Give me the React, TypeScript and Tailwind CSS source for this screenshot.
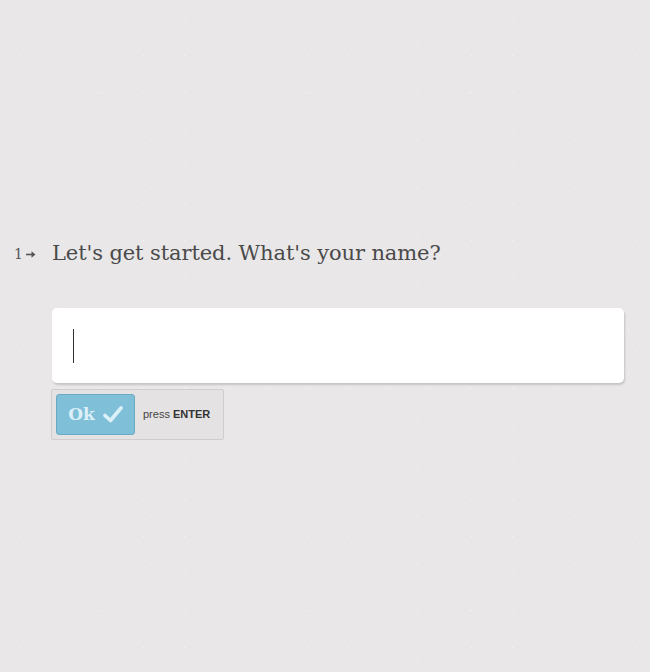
export default function App() {
  return (
    <div className="w-[650px] h-[672px] bg-[#e9e7e8] bg-[radial-gradient(#f7f6f6_0.6px,transparent_0.9px),radial-gradient(#f7f6f6_0.6px,transparent_0.9px)] bg-[length:41px_37px,53px_47px] bg-[position:0_0,19px_23px] font-['DejaVu_Serif',serif] text-[#4a4a4a]">
      <div className="pt-[238px]">
        {/* question */}
        <div className="flex items-center h-[32px]">
          <div className="w-[52px] flex items-center pl-[14px] text-[14px] text-[#555]">
            <span>1</span>
            <svg width="11" height="9" viewBox="0 0 11 9" className="ml-[3px]">
              <path d="M0 4.5h7" stroke="#555" strokeWidth="1.6" />
              <path d="M5.5 1.2L9.5 4.5L5.5 7.8z" fill="#555" />
            </svg>
          </div>
          <h1 className="text-[21px] tracking-[-0.1px] text-[#4a4a4a]">Let's get started. What's your name?</h1>
        </div>

        {/* input */}
        <div className="ml-[52px] mt-[38px] w-[572px] h-[75px] bg-white rounded-[5px] shadow-[1px_2px_2px_rgba(0,0,0,0.15)] flex items-center pl-[21px]">
          <div className="w-[1px] h-[34px] bg-[#333]" />
        </div>

        {/* ok */}
        <div className="ml-[51px] mt-[6px] w-[173px] h-[51px] bg-[#e4e2e3] border border-[#cfcdce] rounded-[2px] flex items-center pl-[4px]">
          <button className="w-[79px] h-[41px] bg-[#7fbfd8] border border-[#6aaac4] rounded-[3px] flex items-center justify-center gap-[8px] text-[#dcf0f7]">
            <span className="font-['DejaVu_Serif',serif] font-bold text-[17px]">Ok</span>
            <svg width="20" height="17" viewBox="0 0 20 17">
              <path d="M2 9.5L7.5 14.5L18 2" stroke="#dcf0f7" strokeWidth="3.6" fill="none" strokeLinecap="round" strokeLinejoin="round" />
            </svg>
          </button>
          <span className="ml-[8px] font-['Liberation_Sans',sans-serif] text-[11px] text-[#444]">
            press <b className="text-[#333]">ENTER</b>
          </span>
        </div>
      </div>
    </div>
  );
}
